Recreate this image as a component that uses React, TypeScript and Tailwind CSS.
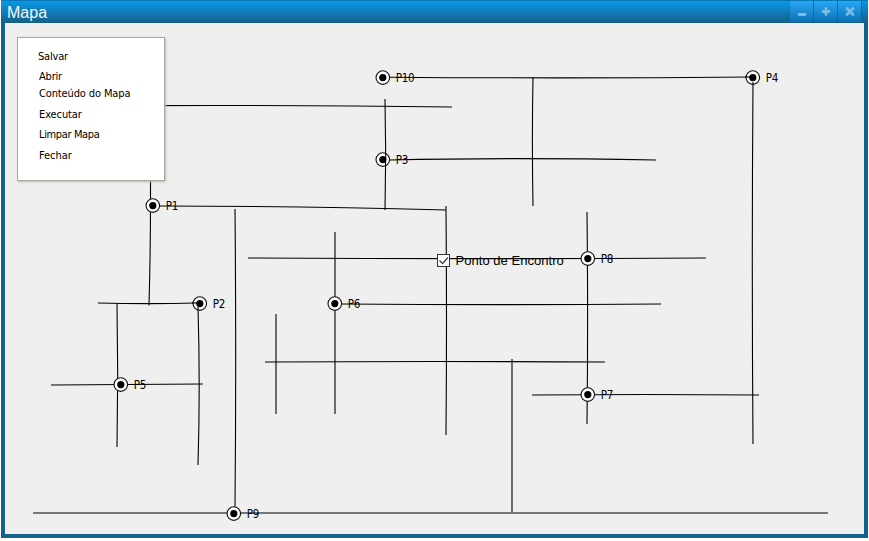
const roads = [
  "M140 105.6Q300 105 452 107",
  "M390 77.2Q570 78.6 752 77",
  "M533 77Q531.8 140 533 206",
  "M390 160Q510 157.2 656 160",
  "M160 206Q290 206 446 210",
  "M150.5 170V205Q150.5 250 149 305.5",
  "M98 303Q150 304.2 195 303",
  "M117 303.5Q118.4 375 117 447",
  "M51 385Q130 384.4 203 384",
  "M235 209Q236.4 360 235 507",
  "M248 258Q477 259.2 706 258",
  "M335 232V414",
  "M276 314V414",
  "M342 304Q500 305.2 661 304",
  "M265 362Q435 361 605 362",
  "M446 206V210Q447 320 446 435",
  "M587 212Q588.2 318 587 424",
  "M532 395Q645 394 759 395",
  "M512 359V512",
  "M33 513Q430 512 828 513",
];

const upperRoads = [
  "M385 99Q386.4 154 385 210",
  "M753 82Q751.6 263 753 444",
  "M198 307Q200.4 386 198 465",
  "M745 77H753",
  "M192 303H200",
];

const points = [
  { name: "P1", x: 152.8, y: 205.6 },
  { name: "P2", x: 199.8, y: 303.6 },
  { name: "P3", x: 382.8, y: 159.6 },
  { name: "P4", x: 752.8, y: 77.6 },
  { name: "P5", x: 120.8, y: 384.6 },
  { name: "P6", x: 334.8, y: 303.6 },
  { name: "P7", x: 587.8, y: 394.6 },
  { name: "P8", x: 587.8, y: 258.6 },
  { name: "P9", x: 233.8, y: 513.6 },
  { name: "P10", x: 382.8, y: 77.6 },
];

const menuItems = [
  { label: "Salvar", style: "h-[20px] -ml-px tracking-[-0.2px]" },
  { label: "Abrir", style: "h-[17px] tracking-[-0.2px]" },
  { label: "Conteúdo do Mapa", style: "h-[21px] tracking-[-0.13px]" },
  { label: "Executar", style: "h-[20px] tracking-[-0.1px]" },
  { label: "Limpar Mapa", style: "h-[21px] tracking-[-0.36px]" },
  { label: "Fechar", style: "h-[20px] tracking-[-0.05px]" },
];

const controls = [
  { name: "Minimizar", path: "M9 13.5H15" },
  { name: "Maximizar", path: "M9 10.5H15M12 7.5V13.5" },
  { name: "Fechar janela", path: "M9 7.5L15 13.5M15 7.5L9 13.5" },
];

function TitleBar() {
  return (
    <header className="flex h-[23px] shrink-0 justify-between border-t border-[#0877b8] bg-linear-to-b from-[#0498ea] to-[#145f88] pl-[6px]">
      <h1 className="font-['Liberation_Sans',sans-serif] text-[16px] leading-[23px] text-[#eef8ff]">Mapa</h1>
      <div className="flex gap-px pr-[7px]">
        {controls.map((c) => (
          <button
            key={c.name}
            aria-label={c.name}
            className="h-[21px] w-[23px] bg-linear-to-b from-[#29a7f3] to-[#0872b4] shadow-[1px_0_0_#0b68a1]"
          >
            <svg width="23" height="21" viewBox="0 0 23 21" fill="none" stroke="#79bde6" strokeWidth="2.8" strokeLinecap="round">
              <path d={c.path} />
            </svg>
          </button>
        ))}
      </div>
    </header>
  );
}

function RoadMap() {
  return (
    <svg className="absolute -top-[23px] -left-[5px]" width="863" height="534" viewBox="0 0 863 534">
      <g fill="none" stroke="#000" strokeWidth="1.1">
        {roads.map((d) => <path key={d} d={d} />)}
      </g>
      {points.map((p) => (
        <g key={p.name}>
          <circle cx={p.x} cy={p.y} r="6.8" fill="#fff" stroke="#111" strokeWidth="1.1" />
          <circle cx={p.x} cy={p.y} r="3.6" />
          <text
            x={Math.round(p.x) + 12.8}
            y={Math.floor(p.y) + 4.6}
            className="font-['DejaVu_Sans_Condensed','DejaVu_Sans',sans-serif] text-[11.5px] tracking-[-0.3px]"
          >
            {p.name}
          </text>
        </g>
      ))}
      <g fill="none" stroke="#000" strokeWidth="1.1">
        {upperRoads.map((d) => <path key={d} d={d} />)}
      </g>
      <rect x="437.5" y="254.5" width="12" height="12" fill="#fff" stroke="#333" />
      <path d="M439.5 260.5L442.5 263.5L448 257.5" fill="none" stroke="#444" strokeWidth="1.3" />
      <text x="455.5" y="265" className="font-['Liberation_Sans',sans-serif] text-[13px] tracking-[0.04px]">
        Ponto de Encontro
      </text>
    </svg>
  );
}

export default function App() {
  return (
    <div className="h-[541px] w-[869px] overflow-hidden bg-white pl-px">
      <main className="flex h-[538px] w-[867px] flex-col bg-[#14628b]">
        <TitleBar />
        <section className="relative mr-[4px] mb-[4px] ml-[4px] flex-1 overflow-hidden bg-[#efefef] pt-[14px] pl-[12px]">
          <RoadMap />
          <nav className="relative h-[144px] w-[148px] border border-[#aca899] bg-white pt-[9px] pl-[21px] shadow-[1px_1px_2px_#bbb]">
            <ul>
              {menuItems.map((item) => (
                <li key={item.label} className={item.style}>
                  <a className="block font-['DejaVu_Sans_Condensed','DejaVu_Sans',sans-serif] text-[11px] leading-[20px] whitespace-nowrap text-black">
                    {item.label}
                  </a>
                </li>
              ))}
            </ul>
          </nav>
        </section>
      </main>
    </div>
  );
}
